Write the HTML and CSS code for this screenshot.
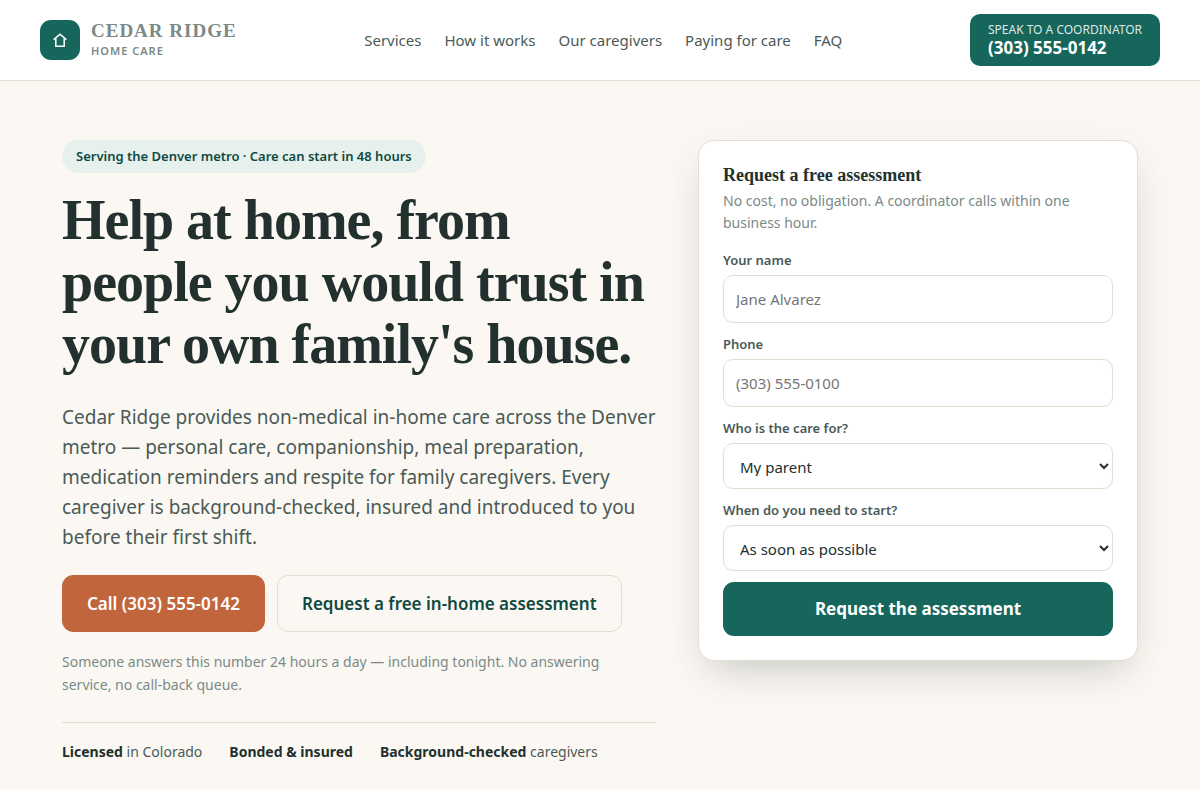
FILE: index.html
```html
<!DOCTYPE html>
<html lang="en">

<head>
  <meta charset="UTF-8" />
  <meta name="viewport" content="width=device-width, initial-scale=1" />
  <title>Cedar Ridge Home Care</title>
  <link rel="stylesheet" href="styles.css">
</head>

<body>
  <header class="site-header">
    <div class="header-inner">
      <a class="brand" href="#">
        <span class="brand-mark">
          <svg width="20" height="20" viewBox="0 0 20 20" fill="none" stroke="currentColor" stroke-width="1.5" aria-hidden="true">
            <path d="M3.6 9.6 10 4.2l6.4 5.4" />
            <path d="M5.8 8.2v8h8.4v-8" />
          </svg>
        </span>
        <span class="brand-text">
          <span class="brand-name">Cedar Ridge</span>
          <span class="brand-sub">Home Care</span>
        </span>
      </a>

      <nav class="site-nav" aria-label="Main">
        <a href="#services">Services</a>
        <a href="#how">How it works</a>
        <a href="#caregivers">Our caregivers</a>
        <a href="#paying">Paying for care</a>
        <a href="#faq">FAQ</a>
      </nav>

      <a class="header-call" href="tel:+13035550142">
        <span class="header-call-label">Speak to a coordinator</span>
        <span class="header-call-number">(303) 555-0142</span>
      </a>
    </div>
  </header>

  <main class="hero">
    <div class="hero-copy">
      <span class="badge">Serving the Denver metro · Care can start in 48 hours</span>
      <h1>Help at home, from people you would trust in your own family's house.</h1>
      <p class="lead">
        Cedar Ridge provides non-medical in-home care across the Denver metro — personal care, companionship,
        meal preparation, medication reminders and respite for family caregivers. Every caregiver is
        background-checked, insured and introduced to you before their first shift.
      </p>
      <div class="hero-actions">
        <a class="btn btn-call" href="tel:+13035550142">Call (303) 555-0142</a>
        <a class="btn btn-outline" href="#assessment">Request a free in-home assessment</a>
      </div>
      <p class="hero-note">
        Someone answers this number 24 hours a day — including tonight. No answering service, no call-back queue.
      </p>
      <ul class="trust">
        <li><strong>Licensed</strong> in Colorado</li>
        <li><strong>Bonded &amp; insured</strong></li>
        <li><strong>Background-checked</strong> caregivers</li>
      </ul>
    </div>

    <form class="card" id="assessment">
      <h2>Request a free assessment</h2>
      <p class="card-intro">No cost, no obligation. A coordinator calls within one business hour.</p>

      <div class="field">
        <label for="name">Your name</label>
        <input type="text" id="name" name="name" placeholder="Jane Alvarez">
      </div>
      <div class="field">
        <label for="phone">Phone</label>
        <input type="tel" id="phone" name="phone" placeholder="(303) 555-0100">
      </div>
      <div class="field">
        <label for="who">Who is the care for?</label>
        <select id="who" name="who">
          <option>My parent</option>
          <option>My spouse</option>
          <option>Myself</option>
        </select>
      </div>
      <div class="field">
        <label for="start">When do you need to start?</label>
        <select id="start" name="start">
          <option>As soon as possible</option>
          <option>Within a month</option>
          <option>Just planning ahead</option>
        </select>
      </div>
      <button class="btn-submit" type="submit">Request the assessment</button>
    </form>
  </main>
</body>

</html>
```

FILE: styles.css
```css
:root {
  --ink: #22302e;
  --ink-soft: #4a5a57;
  --muted: #7b8a86;
  --green: #16665c;
  --green-dark: #0f4a42;
  --green-tint: #e6f0ed;
  --clay: #c1653c;
  --line: #e4ddd0;
  --paper: #fbf8f3;
  --serif: "Liberation Serif", "Times New Roman", serif;
}

* {
  box-sizing: border-box;
}

body {
  margin: 0;
  background: var(--paper);
  color: var(--ink);
  font-family: "Noto Sans", sans-serif;
  font-size: 17px;
  line-height: 1.6;
}

a {
  text-decoration: none;
}

/* Header */
.site-header {
  background: #fff;
  border-bottom: 1px solid var(--line);
}

.header-inner {
  display: flex;
  align-items: center;
  justify-content: space-between;
  max-width: 1200px;
  margin: 0 auto;
  padding: 14px 40px;
}

.brand {
  display: flex;
  align-items: center;
  gap: 11px;
  color: var(--muted);
}

.brand-mark {
  display: grid;
  place-items: center;
  width: 40px;
  height: 40px;
  border-radius: 11px;
  background: var(--green);
  color: #fff;
}

.brand-text {
  display: flex;
  flex-direction: column;
  text-transform: uppercase;
}

.brand-name {
  font-family: var(--serif);
  font-size: 19px;
  font-weight: 700;
  line-height: 22px;
  letter-spacing: 1px;
}

.brand-sub {
  font-size: 11px;
  font-weight: 600;
  line-height: 18px;
  letter-spacing: 1px;
}

.site-nav {
  display: flex;
  gap: 23px;
  font-size: 15px;
}

.site-nav a {
  color: var(--ink-soft);
}

.header-call {
  display: flex;
  flex-direction: column;
  padding: 8px 18px;
  border-radius: 10px;
  background: var(--green);
  color: #fff;
}

.header-call-label {
  font-size: 12px;
  line-height: 15px;
  text-transform: uppercase;
  opacity: 0.85;
}

.header-call-number {
  font-size: 17px;
  font-weight: 700;
  line-height: 21px;
}

/* Hero */
.hero {
  display: grid;
  grid-template-columns: 1.35fr 1fr;
  gap: 42px;
  align-items: start;
  max-width: 1120px;
  margin: 0 auto;
  padding: 59px 22px 40px;
}

.badge {
  display: inline-block;
  padding: 6px 14px;
  border-radius: 999px;
  background: var(--green-tint);
  color: var(--green-dark);
  font-size: 13px;
  font-weight: 600;
  line-height: 21px;
  vertical-align: top;
}

h1 {
  margin: 16px 0 27px;
  font-family: var(--serif);
  font-size: 56px;
  line-height: 62px;
  letter-spacing: -1px;
}

.lead {
  margin: 0 0 23px;
  color: var(--ink-soft);
  font-size: 19px;
  line-height: 30px;
}

.hero-actions {
  display: flex;
  flex-wrap: wrap;
  gap: 12px;
}

.btn {
  padding: 14px 24px;
  border: 1px solid var(--line);
  border-radius: 11px;
  font-weight: 600;
  line-height: 27px;
}

.btn-call {
  border-color: var(--clay);
  background: var(--clay);
  color: #fff;
}

.btn-outline {
  color: var(--green-dark);
}

.hero-note {
  max-width: 580px;
  margin: 18px 0 26px;
  color: var(--muted);
  font-size: 14px;
  line-height: 23px;
}

.trust {
  display: flex;
  flex-wrap: wrap;
  gap: 27px;
  margin: 0;
  padding: 17px 0 0;
  border-top: 1px solid var(--line);
  color: var(--ink-soft);
  font-size: 14px;
  line-height: 23px;
  list-style: none;
}

.trust strong {
  color: var(--ink);
}

/* Assessment form */
.card {
  padding: 24px;
  border: 1px solid var(--line);
  border-radius: 16px;
  background: #fff;
  box-shadow: 0 12px 50px rgba(34, 48, 46, 0.05), 0 18px 36px -18px rgba(34, 48, 46, 0.26);
}

.card h2 {
  margin: 0 0 5px;
  font-family: var(--serif);
  font-size: 18px;
  line-height: 20px;
}

.card-intro {
  margin: 0 0 16px;
  color: var(--muted);
  font-size: 14px;
  line-height: 22px;
}

.field {
  display: flex;
  flex-direction: column;
  gap: 5px;
  margin-bottom: 11px;
}

.field label {
  color: var(--ink-soft);
  font-size: 13px;
  font-weight: 600;
  line-height: 20px;
}

.field input,
.field select {
  width: 100%;
  padding: 12px;
  border: 1px solid var(--line);
  border-radius: 10px;
  background: #fff;
  color: var(--ink);
  font-family: inherit;
  font-size: 15px;
}

.field input {
  height: 48px;
}

.field select {
  height: 46px;
}

.btn-submit {
  display: block;
  width: 100%;
  padding: 14px;
  border: 0;
  border-radius: 11px;
  background: var(--green);
  color: #fff;
  font-family: inherit;
  font-size: 17px;
  font-weight: 700;
  line-height: 26px;
  cursor: pointer;
}

@media (max-width: 900px) {
  .site-nav {
    display: none;
  }

  .hero {
    grid-template-columns: 1fr;
  }
}
```
